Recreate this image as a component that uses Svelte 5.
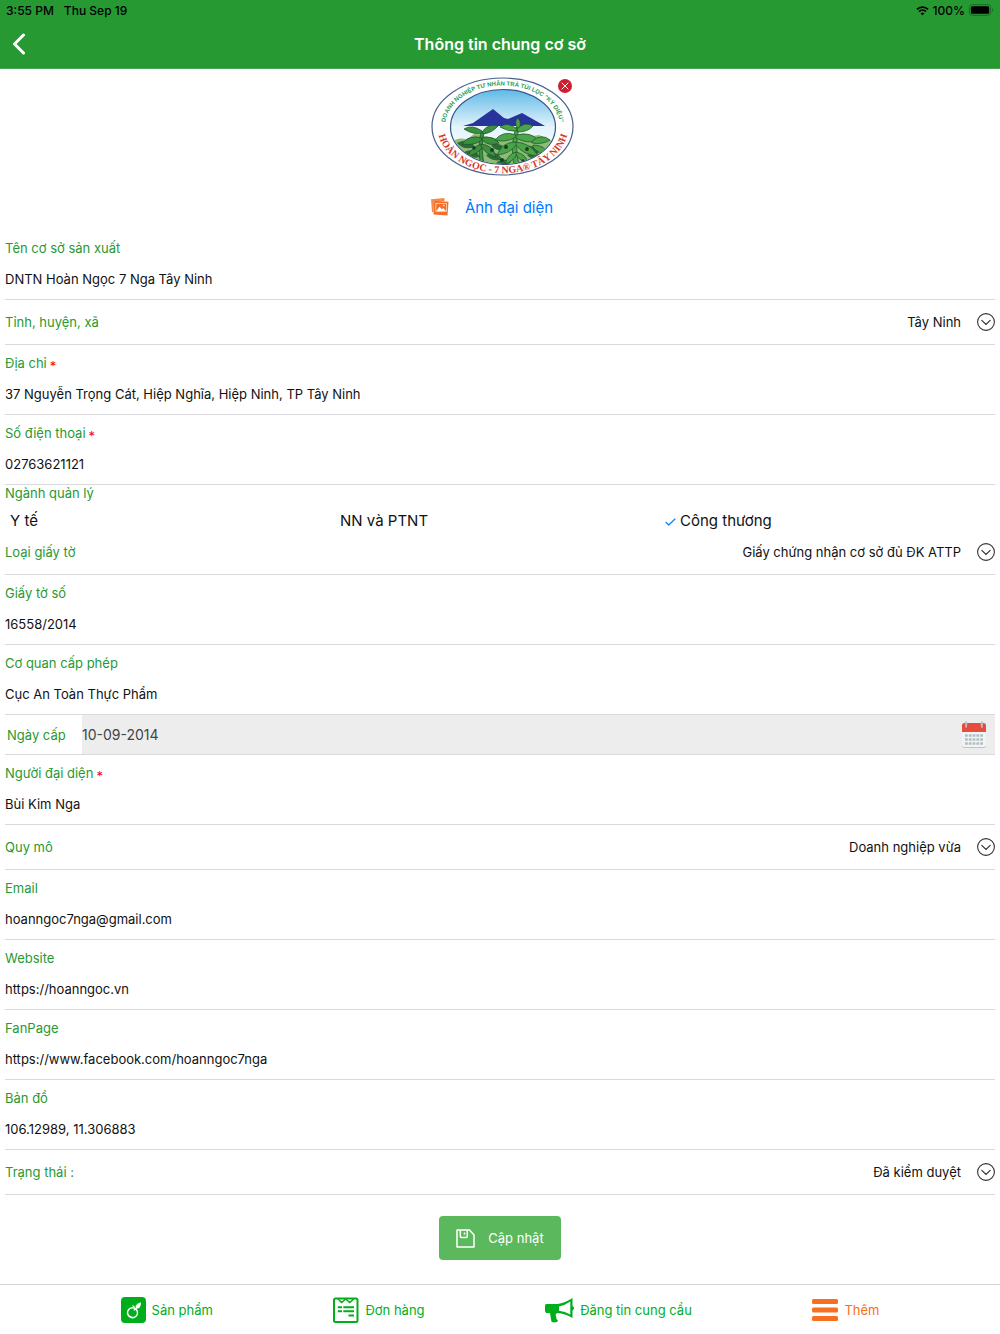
<script>
	let facility = $state({
		name: 'DNTN Hoàn Ngọc 7 Nga Tây Ninh',
		province: 'Tây Ninh',
		address: '37 Nguyễn Trọng Cát, Hiệp Nghĩa, Hiệp Ninh, TP Tây Ninh',
		phone: '02763621121',
		paperType: 'Giấy chứng nhận cơ sở đủ ĐK ATTP',
		paperNo: '16558/2014',
		issuer: 'Cục An Toàn Thực Phẩm',
		issueDate: '10-09-2014',
		owner: 'Bùi Kim Nga',
		scale: 'Doanh nghiệp vừa',
		email: 'hoanngoc7nga@gmail.com',
		website: 'https://hoanngoc.vn',
		fanpage: 'https://www.facebook.com/hoanngoc7nga',
		map: '106.12989, 11.306883',
		status: 'Đã kiểm duyệt'
	});

	let sectors = $state([
		{ name: 'Y tế', checked: false },
		{ name: 'NN và PTNT', checked: false },
		{ name: 'Công thương', checked: true }
	]);

	let hasImage = $state(true);

	function handleSubmit(event) {
		event.preventDefault();
	}
</script>

{#snippet textField(key, label, required = false)}
	<div class="field">
		<label for={key}>{label}{#if required}<span class="required">*</span>{/if}</label>
		<input id={key} type="text" bind:value={facility[key]} {required} />
	</div>
{/snippet}

{#snippet selectField(key, label)}
	<div class="field-select">
		<label for={key}>{label}</label>
		<select id={key} bind:value={facility[key]}>
			<option>{facility[key]}</option>
		</select>
		<svg width="18" height="18" viewBox="0 0 18 18" fill="none" stroke="#333" aria-hidden="true">
			<circle cx="9" cy="9" r="8.4" stroke-width="1.1" />
			<path d="M4.8 7.4 9 11.4l4.2-4" stroke-width="1.2" stroke-linecap="round" />
		</svg>
	</div>
{/snippet}

<div class="page">
	<header>
		<div class="status-bar">
			<span>3:55 PM</span>
			<span>Thu Sep 19</span>
			<span class="battery">
				<svg width="13" height="11" viewBox="0 0 14 11" fill="none" stroke="#000" stroke-width="1.9" aria-hidden="true">
					<path d="M1 4.2a8.6 8.6 0 0 1 12 0" />
					<path d="M3.3 6.6a5.3 5.3 0 0 1 7.4 0" />
					<path d="M5 8.6a2.9 2.9 0 0 1 4 0L7 10.6z" fill="#000" stroke="none" />
				</svg>
				100%
				<svg width="25" height="12" viewBox="0 0 26 12" aria-hidden="true">
					<rect x="0.5" y="0.5" width="22" height="11" rx="3" fill="none" stroke="#196625" />
					<rect x="2" y="2" width="19" height="8" rx="1.6" />
					<path d="M24 4a2.4 2.4 0 0 1 0 4z" fill="#196625" />
				</svg>
			</span>
		</div>
		<div class="title-bar">
			<button type="button" class="back" aria-label="Quay lại">
				<svg width="14" height="22" viewBox="0 0 14 22" fill="none" stroke="#fff" stroke-width="3" stroke-linecap="round" stroke-linejoin="round">
					<path d="M11.5 2 2.5 11l9 9" />
				</svg>
			</button>
			<h1>Thông tin chung cơ sở</h1>
		</div>
	</header>

	<main>
		<div class="avatar">
			{#if hasImage}
				<div class="picture">
					<svg width="144" height="100" viewBox="0 0 144 100" role="img" aria-label="Logo cơ sở">
						<defs>
							<linearGradient id="sky" x1="0" y1="0" x2="0" y2="1">
								<stop offset="0" stop-color="#5fb9e8" />
								<stop offset="0.5" stop-color="#e4f4fb" />
								<stop offset="1" stop-color="#fff" />
							</linearGradient>
							<clipPath id="inner"><ellipse cx="72" cy="50" rx="52" ry="37" /></clipPath>
							<path id="arc-top" d="M17.5 63.500A57.500 41 0 1 1 125.500 63.500" />
							<path id="arc-bottom" d="M8 59A65 45 0 0 0 136 59" />
						</defs>
						<ellipse cx="71.5" cy="49.5" rx="70.5" ry="48.5" fill="#fff" stroke="#46608f" stroke-width="1.2" />
						<ellipse cx="72" cy="50" rx="52.5" ry="37.5" fill="url(#sky)" stroke="#35558d" stroke-width="1.2" />
						<g clip-path="url(#inner)">
							<path d="M32 49 42 46 62 32 73 41 77 42 91 36 114 49z" fill="#27349c" />
							<path d="M20 66q8-7 16-3l8-7 14 4 10 2 12-4 16 2 12-2 18 8v28H24z" fill="#8dbb78" />
							<g fill="#2c6a36">
								<path d="M26 66q12-6 18 4-11 4-18-4z" />
								<path d="M33 75q11-5 16 5-11 3-16-5z" />
								<path d="M55 78q12-6 16 5-11 2-16-5z" />
								<path d="M60 68q10-4 14 5-10 2-14-5z" />
								<path d="M96 78q9-6 15 2-6 7-15-2z" />
								<path d="M92 70q12-4 16 6-11 2-16-6z" />
								<path d="M64 87q8-8 16-2-6 7-16 2z" />
								<path d="M39 83q7-4 11 3-6 3-11-3z" />
							</g>
							<g fill="#3c8f3f" stroke="#1c4f28" stroke-width="0.7">
								<path d="M50 90q-4-18 0-36l3 1q-4 18 1 35z" />
								<path d="M51 54q-10-7-18-2 9 6 18 4z" />
								<path d="M51 55q6-9 16-6-6 7-15 8z" />
								<path d="M51 61q-13-4-20 6 12 2 20-4z" />
								<path d="M51 61q11-3 17 5-10 4-17-3z" />
								<path d="M51 67q-11 3-14 12 11-2 15-10z" />
								<path d="M51 67q12 2 14 13-11-3-15-11z" />
							</g>
							<g fill="#4ba447" stroke="#1b502a" stroke-width="0.7">
								<path d="M84 92q-6-20 1-42l3 1q-5 20 1 41z" />
								<path d="M86 51q-3-7 1-10 4 5 1 10z" />
								<path d="M86 52q-10-8-17-2 8 5 17 4z" />
								<path d="M86 52q8-8 16-3-5 6-15 6z" />
								<path d="M85 58q-13-5-21 5 11 3 21-3z" />
								<path d="M85 58q15-4 23 6-13 3-23-3z" />
								<path d="M85 65q-14 0-19 13 13-1 20-11z" />
								<path d="M85 65q15 1 22 14-15-1-22-11z" />
								<path d="M85 75q-8 2-11 12 9-3 12-10z" />
								<path d="M85 75q10 2 12 11-10-3-12-9z" />
								<path d="M101 64q10-8 18-1-8 5-18 3z" />
								<path d="M102 68q12 0 15 9-10 0-15-7z" />
							</g>
							<g fill="#173f23">
								<circle cx="43" cy="71" r="1.8" />
								<circle cx="61" cy="73" r="2" />
								<circle cx="75" cy="70" r="2" />
								<circle cx="96" cy="72" r="1.9" />
								<circle cx="71" cy="83" r="2" />
								<circle cx="92" cy="84" r="1.7" />
							</g>
						</g>
						<text class="logo-top"><textPath href="#arc-top" startOffset="50%">DOANH NGHIỆP TƯ NHÂN TRÀ TÚI LỌC "KỲ DIỆU"</textPath></text>
						<text class="logo-bottom"><textPath href="#arc-bottom" startOffset="50%">HOÀN NGỌC - 7 NGA® TÂY NINH</textPath></text>
					</svg>
					<button type="button" class="remove" aria-label="Xóa ảnh" onclick={() => (hasImage = false)}>
						<svg width="14" height="14" viewBox="0 0 14 14" fill="none" stroke="#fff" stroke-linecap="round">
							<path d="M4 4l6 6M10 4l-6 6" />
						</svg>
					</button>
				</div>
			{/if}
			<button type="button" class="choose">
				<svg width="18" height="18" viewBox="0 0 18 18" aria-hidden="true">
					<path d="M0 1.2 13.5 0v3H3.2L2.5 14 1 14.2z" fill="#f58a4b" />
					<path d="M3.2 2.8 17.5 3.8 16.5 17.6 2.5 16.6z" fill="#f3702a" />
					<path d="M4.6 5h11v8.6h-11z" fill="#fff" />
					<path d="M5.2 5.6h9.800v7.400H5.200z" fill="#f3702a" />
					<path d="M5.500 13 8.500 8.800l2.300 2.400 1.500-1.300 2.500 3.100z" fill="#fff" />
					<circle cx="12.8" cy="7.5" r="0.8" fill="#fff" />
				</svg>
				Ảnh đại diện
			</button>
		</div>

		<form onsubmit={handleSubmit}>
			{@render textField('name', 'Tên cơ sở sản xuất')}
			{@render selectField('province', 'Tỉnh, huyện, xã')}
			{@render textField('address', 'Địa chỉ', true)}
			{@render textField('phone', 'Số điện thoại', true)}

			<fieldset>
				<legend>Ngành quản lý</legend>
				<div class="sectors">
					{#each sectors as sector}
						<label class:checked={sector.checked}>
							<input type="checkbox" bind:checked={sector.checked} />
							{#if sector.checked}
								<svg width="11" height="8" viewBox="0 0 11 8" fill="none" stroke="#1787fb" stroke-width="1.4" aria-hidden="true">
									<path d="M0.7 4 3.7 7 10.3 0.7" />
								</svg>
							{/if}
							{sector.name}
						</label>
					{/each}
				</div>
			</fieldset>

			{@render selectField('paperType', 'Loại giấy tờ')}
			{@render textField('paperNo', 'Giấy tờ số')}
			{@render textField('issuer', 'Cơ quan cấp phép')}

			<div class="field-date">
				<label for="issueDate">Ngày cấp</label>
				<div class="date-box">
					<input id="issueDate" type="text" bind:value={facility.issueDate} />
					<button type="button" class="calendar" aria-label="Chọn ngày">
						<svg width="24" height="28" viewBox="0 0 24 28">
							<path d="M0 9h24v15.5a2.5 2.5 0 0 1-2.5 2.5h-19A2.5 2.5 0 0 1 0 24.5z" fill="#bcc6c9" />
							<path d="M0 9h24v14.5a2.5 2.5 0 0 1-2.5 2.5h-19A2.5 2.5 0 0 1 0 23.5z" fill="#f1f4f5" />
							<path d="M2.5 2h19A2.5 2.5 0 0 1 24 4.5V11H0V4.5A2.5 2.5 0 0 1 2.5 2z" fill="#e84c3d" />
							<path d="M2.5 4.5a1.8 1.8 0 1 0 3.6 0zM17.9 4.5a1.8 1.8 0 1 0 3.6 0z" fill="#b83b30" />
							<path d="M4.2 1.3v4.5M19.8 1.3v4.5" stroke="#b9c3c7" stroke-width="2" stroke-linecap="round" />
							<path d="M3 14.5h18M3 18.5h18M3 22.5h18" stroke="#b4bec2" stroke-width="2.6" stroke-dasharray="2.8 1" />
						</svg>
					</button>
				</div>
			</div>

			{@render textField('owner', 'Người đại diện', true)}
			{@render selectField('scale', 'Quy mô')}
			{@render textField('email', 'Email')}
			{@render textField('website', 'Website')}
			{@render textField('fanpage', 'FanPage')}
			{@render textField('map', 'Bản đồ')}
			{@render selectField('status', 'Trạng thái :')}

			<button type="submit" class="submit">
				<svg width="19" height="19" viewBox="0 0 19 19" fill="none" stroke="#fff" stroke-width="1.5" stroke-linejoin="round" aria-hidden="true">
					<path d="M1 1h12.5L18 6v12H1z" />
					<path d="M4.3 1v6.5q0 1 1 1h5q1 0 1-1V1" />
					<path d="M8.5 3.5v2" />
				</svg>
				Cập nhật
			</button>
		</form>
	</main>

	<nav>
		<a href="#products">
			<svg width="25" height="26" viewBox="0 0 25 26" aria-hidden="true">
				<rect width="25" height="26" rx="4" fill="#00ae1b" />
				<circle cx="11.5" cy="15.8" r="5" fill="none" stroke="#fff" stroke-width="1.4" />
				<path d="M6.6 15.3A5 5 0 0 0 15 19.5a6.5 6.5 0 0 1-8.4-4.2z" fill="#fff" />
				<path d="M12.8 13q2.5-.5 3.3-3.5" fill="none" stroke="#fff" stroke-width="1.3" />
				<path d="M14.500 9.800q0-2.500 5.500-4.500.3 3.500-1.500 5.500-1.500 1-3 .3z" fill="#fff" />
				<path d="M11 8.300q2.300-.4 3.300 2.600-2.600 0-3.300-2.600z" fill="#fff" />
			</svg>
			Sản phẩm
		</a>
		<a href="#orders">
			<svg width="26" height="26" viewBox="0 0 26 26" fill="none" stroke="#00ae1b" stroke-width="2" aria-hidden="true">
				<rect x="1" y="1.5" width="23.5" height="23.5" rx="1.5" />
				<path d="M5 2 8.700 5.500 12.700 2l4 3.500L20.700 2" stroke-width="1.5" />
				<path d="M4.800 10.300H9M10.300 10.300h10.700M4.800 14.300H9M10.300 14.300h10.700M15.500 18.500H21" />
			</svg>
			Đơn hàng
		</a>
		<a href="#offers">
			<svg width="29" height="26" viewBox="0 0 29 26" aria-hidden="true">
				<path d="M1.500 7h11Q20 6 27.500 1v20Q20 16.500 12 16l-1 1q-1 1 0 2l.5 3 1.500 1.800-1 1.200q-3.500 1-5.500-.3Q5.500 20 5 16H1.500Q0 15.500 0 14V8.500Q0 7 1.500 7z" fill="#00ae1b" />
				<path d="M14 9.500Q20.500 8 25.300 4.500v13Q20 14.500 14 13.800z" fill="#fff" />
				<path d="M27 9q2 .2 2 2.200T27 13.500z" fill="#00ae1b" />
			</svg>
			Đăng tin cung cầu
		</a>
		<a href="#more" class="more">
			<svg width="26" height="22" viewBox="0 0 26 22" fill="#f76f20" aria-hidden="true">
				<rect y="0" width="26" height="5" rx="1.5" />
				<rect y="8.5" width="26" height="5" rx="1.5" />
				<rect y="17" width="26" height="5" rx="1.5" />
			</svg>
			Thêm
		</a>
	</nav>
</div>

<style>
	:global(body) {
		background: #fff;
	}

	.page {
		display: flex;
		flex-direction: column;
		min-height: 100vh;
		font-family: Inter, 'Noto Sans', sans-serif;
		font-size: 13px;
		color: #111;
	}

	svg {
		display: block;
		flex-shrink: 0;
	}

	button,
	input,
	select {
		margin: 0;
		padding: 0;
		border: none;
		background: none;
		font: inherit;
		color: inherit;
	}

	button {
		cursor: pointer;
	}

	header {
		background: #279933;
		border-bottom: 1px solid #47a751;
	}

	.status-bar {
		display: flex;
		align-items: center;
		gap: 10px;
		height: 20px;
		padding: 0 6px;
		font-size: 12px;
		font-weight: 500;
		color: #000;
	}

	.battery {
		display: flex;
		align-items: center;
		gap: 4px;
		margin-left: auto;
	}

	.title-bar {
		display: grid;
		grid-template-columns: 40px 1fr 40px;
		align-items: center;
		height: 48px;
	}

	.back {
		padding-left: 12px;
	}

	h1 {
		margin: 0;
		font-size: 16px;
		font-weight: 600;
		text-align: center;
		color: #fff;
	}

	main {
		flex: 1;
	}

	.avatar {
		display: flex;
		flex-direction: column;
		align-items: center;
		gap: 18px;
		padding: 8px 0 11px;
	}

	.picture {
		position: relative;
		padding-left: 5px;
	}

	.remove {
		position: absolute;
		top: 2px;
		right: 3px;
		border-radius: 50%;
		background: #ce1f31;
	}

	.logo-top {
		font-family: 'Liberation Sans', sans-serif;
		font-size: 6px;
		font-weight: 700;
		fill: #1d9b57;
		text-anchor: middle;
	}

	.logo-bottom {
		font-family: 'Liberation Serif', serif;
		font-size: 10px;
		font-weight: 700;
		fill: #d4382c;
		text-anchor: middle;
	}

	.choose {
		display: flex;
		align-items: center;
		gap: 16px;
		height: 24px;
		padding-right: 16px;
		font-size: 15px;
		color: #007aff;
	}

	form {
		display: flex;
		flex-direction: column;
		padding: 0 5px;
	}

	label,
	legend {
		line-height: 20px;
		color: #279933;
	}

	.field {
		display: flex;
		flex-direction: column;
		gap: 6px;
		padding: 8px 0 5px;
		border-bottom: 1px solid #d9d9de;
	}

	.field input {
		height: 30px;
	}

	.required {
		margin-left: 3px;
		line-height: 1;
		vertical-align: -3px;
		color: #f00;
	}

	.field-select {
		display: flex;
		align-items: center;
		height: 44px;
		border-bottom: 1px solid #d9d9de;
	}

	select {
		flex: 1;
		height: 30px;
		margin-right: 16px;
		appearance: none;
		text-align-last: right;
	}

	fieldset {
		margin: 0;
		padding: 0;
		border: none;
	}

	legend {
		padding: 0;
		line-height: 17px;
	}

	.sectors {
		display: grid;
		grid-template-columns: repeat(3, 1fr);
		padding-top: 10px;
	}

	.sectors label {
		display: flex;
		align-items: baseline;
		gap: 4px;
		padding-left: 5px;
		font-size: 15px;
		line-height: 18px;
		color: #111;
	}

	.sectors label.checked {
		padding-left: 0;
	}

	.sectors input {
		position: absolute;
		opacity: 0;
	}

	.field-date {
		display: flex;
		align-items: center;
		height: 39px;
		border-bottom: 1px solid #d9d9de;
	}

	.field-date label {
		width: 75px;
		padding-left: 2px;
	}

	.date-box {
		display: flex;
		flex: 1;
		align-items: center;
		height: 39px;
		padding-right: 9px;
		background: #ededed;
	}

	.date-box input {
		flex: 1;
		font-size: 14px;
		color: #444;
	}

	.submit {
		display: flex;
		align-items: center;
		align-self: center;
		gap: 13px;
		height: 44px;
		margin: 21px 0 24px;
		padding: 0 17px;
		border-radius: 4px;
		background: #5cb85c;
		color: #fff;
	}

	nav {
		position: sticky;
		bottom: 0;
		display: flex;
		align-items: center;
		justify-content: space-evenly;
		height: 49px;
		border-top: 1px solid #d5d5d5;
		background: #fff;
	}

	nav a {
		display: flex;
		align-items: center;
		gap: 6px;
		color: #00ae1b;
		text-decoration: none;
	}

	nav .more {
		color: #f76f20;
	}
</style>
